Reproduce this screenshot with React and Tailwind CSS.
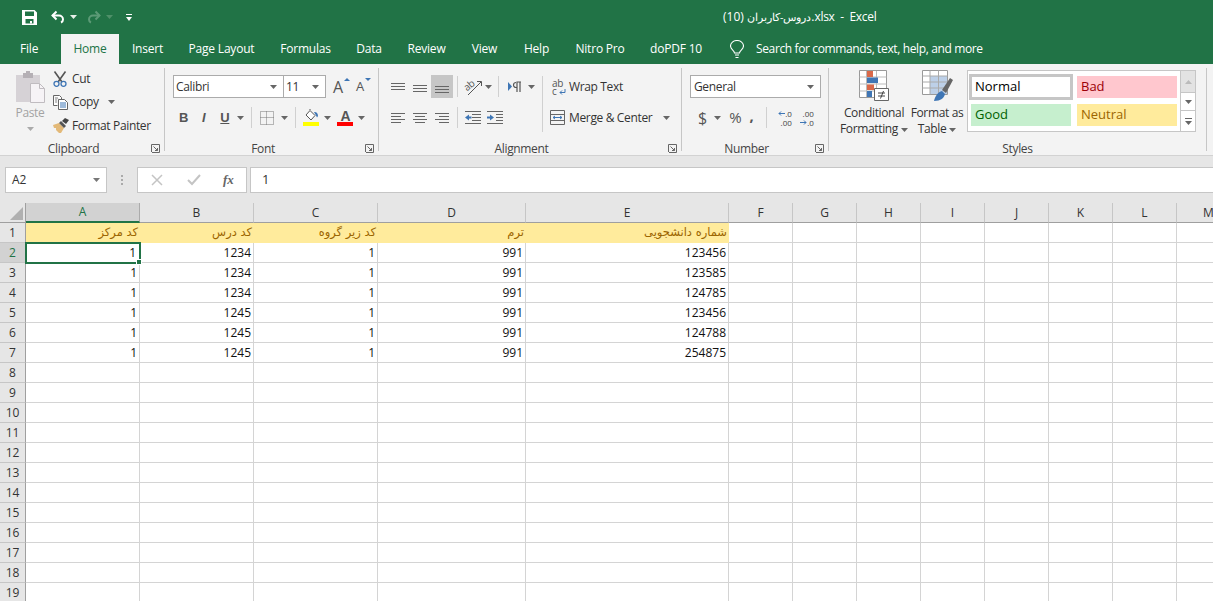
import React from 'react';

const uiFont = "font-['Open_Sans',sans-serif]";

const Caret = ({ className = 'ml-[6px]', color = '#666' }) => (
  <svg width="7" height="4" viewBox="0 0 7 4" className={`shrink-0 ${className}`}>
    <path d="M0 0h7L3.5 4z" fill={color} />
  </svg>
);

const Launcher = () => (
  <svg width="9" height="9" viewBox="0 0 9 9" className="shrink-0" fill="none" stroke="#666">
    <path d="M.5 8V.5H8.5V8.5H1" />
    <path d="M2.5 2.5l4 4M6.5 4v2.5H4" />
  </svg>
);

const VSep = ({ className = '' }) => <div className={`w-px h-[21px] bg-[#d0d0d0] shrink-0 ${className}`} />;

// horizontal line stacks used by the alignment buttons
const Lines = ({ rows, w = 14, h = 16 }) => (
  <svg width={w} height={h} viewBox={`0 0 ${w} ${h}`} className="shrink-0" stroke="#666">
    {rows.map(([x1, x2, y], i) => (
      <path key={i} d={`M${x1} ${y + 0.5}H${x2}`} />
    ))}
  </svg>
);

const Group = ({ width, label, launcher = true, children }) => (
  <div className={`flex h-full shrink-0 ${width}`}>
    <div className="flex flex-col flex-1 min-w-0">
      <div className="h-[76px]">{children}</div>
      <div className="flex items-center h-[16px]">
        <div className="flex-1 text-center text-[12px] leading-[16px] pt-[3px] text-[#444]">{label}</div>
        {launcher && <div className="w-[17px] flex justify-center pt-[2px]"><Launcher /></div>}
      </div>
    </div>
    <div className="w-px my-[4px] bg-[#c6c6c6] shrink-0" />
  </div>
);

const SaveIcon = () => (
  <svg width="15" height="15" viewBox="0 0 15 15">
    <path fillRule="evenodd" fill="#fff" d="M0 0h12.5L15 2.5V15H0zM3 1.5V6h9V1.5zM3.5 9v4.5h8V9z" />
    <path fill="#fff" d="M8 11h2v2.5H8z" />
  </svg>
);

const UndoIcon = ({ color = '#fff' }) => (
  <svg width="14" height="14" viewBox="0 0 14 14" fill="none" stroke={color} strokeWidth="2">
    <path d="M5.5 1.5L1.5 5.5l4 4" />
    <path d="M1.5 5.5H8a4 4 0 0 1 4 4c0 1.5-.8 2.5-2 3" />
  </svg>
);

const PasteIcon = () => (
  <svg width="29" height="32" viewBox="0 0 29 32">
    <path d="M0 4h24v27H0z" fill="#d6d2d6" />
    <path d="M7 2h3V0h4v2h3v5H7z" fill="#b5b0b5" />
    <path d="M14.5 12.500h9l5 5V31.500h-14z" fill="#f6f3f6" stroke="#c0bcc0" />
    <path d="M23.500 12.500v5h5" fill="none" stroke="#c0bcc0" />
  </svg>
);

const ScissorsIcon = () => (
  <svg width="14" height="16" viewBox="0 0 14 16" fill="none">
    <path d="M1.500 0.500L9 11M12.500 0.500L5 11" stroke="#555" strokeWidth="1.600" />
    <circle cx="3.500" cy="12.800" r="2.500" stroke="#3f76b5" strokeWidth="1.300" />
    <circle cx="10.500" cy="12.800" r="2.500" stroke="#3f76b5" strokeWidth="1.300" />
  </svg>
);

const CopyIcon = () => (
  <svg width="15" height="15" viewBox="0 0 15 15" fill="none" stroke="#666">
    <path d="M.5.500h6l2 2v2M.5.500v10h4" fill="#fff" />
    <path d="M5.500 4.500h6l3 3v7h-9z" fill="#fff" />
    <path d="M7 8h6M7 10h6M7 12h6" stroke="#3f76b5" />
    <path d="M2 3h3M2 5h2M2 7h2" stroke="#888" />
  </svg>
);

const PainterIcon = () => (
  <svg width="16" height="15" viewBox="0 0 16 15">
    <path d="M0 7l6-2 5 5-3 5H6L4 13 3 12v-2H1z" fill="#e3b978" />
    <path d="M6 5l2-2 5 5-2 2z" fill="#555" />
    <path d="M9 3l3-3 4 2-3 4z" fill="#444" />
  </svg>
);

const FillIcon = () => (
  <svg width="16" height="17" viewBox="0 0 16 17" fill="none">
    <path d="M3 6l4-4.500 5 5L8 11z" fill="#fff" stroke="#555" />
    <path d="M7 1V0" stroke="#555" />
    <path d="M11 3c2-.5 4 1 4 4l-1 1.500-1-2z" fill="#3f76b5" />
    <path d="M0 13h16v4H0z" fill="#ffff00" />
  </svg>
);

const BorderIcon = () => (
  <svg width="14" height="14" viewBox="0 0 14 14" fill="none" stroke="#777" strokeDasharray="1 1">
    <path d="M.5.500h13v13H.5zM6.500 .500v13M.5 6.500h13" />
  </svg>
);

const OrientIcon = () => (
  <svg width="18" height="18" viewBox="0 0 18 18" fill="none" className="shrink-0 overflow-visible">
    <text x="0" y="10" transform="rotate(-40 6 9)" fontSize="10" fill="#555" fontFamily="Open Sans">ab</text>
    <path d="M3 17L16 4" stroke="#555" />
    <path d="M12 3.500h4.500V8" stroke="#555" />
  </svg>
);

const DirIcon = () => (
  <svg width="14" height="11" viewBox="0 0 14 11" className="shrink-0">
    <path d="M0 1l4 4.500L0 10z" fill="#3f76b5" />
    <path d="M8 1.500a2.500 2.500 0 0 0 0 5h1V1H13M9 1v10M12 1v10" fill="none" stroke="#555" strokeWidth="1.200" />
  </svg>
);

const IndentIcon = ({ flip }) => (
  <svg width="16" height="14" viewBox="0 0 16 14" className="shrink-0" stroke="#666">
    {flip ? (
      <>
        <path d="M0 .500h16M9 3.500h7M9 6.500h7M9 9.500h7M0 12.500h16" />
        <path d="M7 6.500L3 3.500v2H0v2h3v2z" fill="#3f76b5" stroke="none" />
      </>
    ) : (
      <>
        <path d="M0 .500h16M7 3.500h9M7 6.500h9M7 9.500h9M0 12.500h16" />
        <path d="M0 6.500l4-3v2h2.500v2H4v2z" fill="#3f76b5" stroke="none" />
      </>
    )}
  </svg>
);

const MergeIcon = () => (
  <svg width="15" height="15" viewBox="0 0 15 15" fill="none" className="shrink-0">
    <path d="M.5.500h14v14H.5zM.5 4.500h14M.5 10.500h14" stroke="#666" />
    <path d="M3 7.500h9M3 7.500l2-1.500M3 7.500l2 1.500M12 7.500l-2-1.500M12 7.500l-2 1.500" stroke="#3f76b5" />
  </svg>
);

const CondIcon = () => (
  <svg width="30" height="31" viewBox="0 0 30 31" fill="none">
    <path d="M.5.500h27v27H.5z" fill="#fff" stroke="#999" />
    <path d="M7.500 1v26M17.500 1v26M.5 7h27M.5 14h27M.5 21h27" stroke="#bbb" />
    <path d="M8 1h6v6H8z" fill="#d9694a" />
    <path d="M8 7.500h11V13H8z" fill="#3f76b5" />
    <path d="M8 14.500h7V20H8z" fill="#d9694a" />
    <path d="M8 21h5v6H8z" fill="#3f76b5" />
    <path d="M15.500 18.500h14v12h-14z" fill="#fff" stroke="#666" />
    <path d="M19 23h7M19 26h7M24.500 21l-3 7.500" stroke="#444" />
  </svg>
);

const TableIcon = () => (
  <svg width="31" height="32" viewBox="0 0 31 32" fill="none">
    <path d="M.5.500h25v24H.5z" fill="#fff" stroke="#999" />
    <path d="M8 6h17v18H8z" fill="#bdd0e8" />
    <path d="M8 .500v24M16.500 .500v24M.5 6h25M.5 12h25M.5 18h25" stroke="#aaa" />
    <path d="M20 20l8-12 3 2-7 13z" fill="#666" />
    <path d="M12 31c1-5 4-9 8-10l3 3c-1 4-4 7-11 7z" fill="#3f76b5" />
  </svg>
);

const Bulb = () => (
  <svg width="14" height="19" viewBox="0 0 14 19" fill="none" stroke="#fff" strokeWidth="1.100">
    <path d="M4.500 13c0-2.500-4-3.500-4-7a6.500 5.500 0 0 1 13 0c0 3.500-4 4.500-4 7z" />
    <path d="M5 15h4M5.500 17.500h3" />
  </svg>
);

const tabs = [
  ['File', 'w-[61px] pl-[20px]'],
  ['Home', 'w-[58px] justify-center bg-[#f3f3f3] text-[#217346]'],
  ['Insert', 'w-[57px] justify-center'],
  ['Page Layout', 'w-[91px] justify-center'],
  ['Formulas', 'w-[77px] justify-center'],
  ['Data', 'w-[50px] justify-center'],
  ['Review', 'w-[65px] justify-center'],
  ['View', 'w-[51px] justify-center'],
  ['Help', 'w-[53px] justify-center'],
  ['Nitro Pro', 'w-[74px] justify-center'],
  ['doPDF 10', 'w-[78px] justify-center'],
];

const UndoFlip = () => (
  <div className="-scale-x-100"><UndoIcon color="#5c9a76" /></div>
);

const TitleBar = () => (
  <div className="flex items-center h-[34px] bg-[#217346] text-white">
    <div className="flex items-center w-[723px] pl-[22px]">
      <SaveIcon />
      <div className="ml-[14px]"><UndoIcon /></div>
      <Caret className="ml-[5px]" color="#e8f0ea" />
      <div className="ml-[10px]"><UndoFlip /></div>
      <Caret className="ml-[5px]" color="#4f9069" />
      <svg width="6" height="7" viewBox="0 0 6 7" className="ml-[13px]" fill="#fff">
        <path d="M0 0h6v1H0zM0 3h6L3 7z" />
      </svg>
    </div>
    <div className="text-[12px] whitespace-pre tracking-[-0.3px]">
      <span className="text-[10.5px]">دروس-کاربران</span>{' (10).xlsx  -  Excel'}
    </div>
  </div>
);

const TabBar = () => (
  <div className="flex items-stretch h-[30px] bg-[#217346] text-white text-[12px] tracking-[-0.2px]">
    {tabs.map(([name, cls]) => (
      <div key={name} className={`flex items-center ${cls}`}>{name}</div>
    ))}
    <div className="ml-[15px] flex items-center"><Bulb /></div>
    <div className="ml-[12px] flex items-center tracking-[-0.37px]">Search for commands, text, help, and more</div>
  </div>
);

const Clipboard = () => (
  <div className="flex">
    <div className="w-[53px] flex flex-col items-center pt-[7px] pl-[7px]">
      <PasteIcon />
      <div className="mt-[2px] text-[12px] leading-[16px] text-[#a3a3a3]">Paste</div>
      <Caret className="mt-[6px]" color="#aaa" />
    </div>
    <div className="flex flex-col pt-[3px] text-[12px] text-[#333]">
      <div className="flex items-center h-[23px]"><div className="w-[19px]"><ScissorsIcon /></div>Cut</div>
      <div className="flex items-center h-[24px]"><div className="w-[19px]"><CopyIcon /></div>Copy<Caret className="ml-[9px]" /></div>
      <div className="flex items-center h-[23px]"><div className="w-[19px]"><PainterIcon /></div>Format Painter</div>
    </div>
  </div>
);

const Combo = ({ text, className }) => (
  <div className={`flex items-center justify-between h-[23px] bg-white border border-[#ababab] pl-[2px] pr-[6px] text-[12px] text-[#333] ${className}`}>
    {text}
    <Caret className="" />
  </div>
);

const FontGroup = () => (
  <div className="pl-[8px] pt-[11px]">
    <div className="flex items-center">
      <Combo text="Calibri" className="w-[111px]" />
      <Combo text="11" className="w-[43px] -ml-px" />
      <div className="relative ml-[7px] w-[14px] text-[16px] leading-none text-[#555]">A
        <svg width="6" height="3" viewBox="0 0 6 3" className="absolute -top-[1px] -right-[3px]"><path d="M0 3h6L3 0z" fill="#3f76b5" /></svg>
      </div>
      <div className="relative ml-[9px] w-[12px] text-[13px] leading-none text-[#555]">A
        <svg width="6" height="3" viewBox="0 0 6 3" className="absolute -top-[2px] -right-[3px]"><path d="M0 0h6L3 3z" fill="#3f76b5" /></svg>
      </div>
    </div>
    <div className="flex items-center h-[23px] mt-[8px] text-[#555] text-[13px]">
      <span className="ml-[6px] font-bold font-['Liberation_Sans',sans-serif]">B</span>
      <span className="ml-[14px] italic font-['Liberation_Sans',sans-serif] font-bold">I</span>
      <span className="ml-[15px] underline font-bold font-['Liberation_Sans',sans-serif]">U</span>
      <Caret className="ml-[8px]" />
      <VSep className="ml-[7px]" />
      <div className="ml-[8px]"><BorderIcon /></div>
      <Caret className="ml-[7px]" />
      <VSep className="ml-[7px]" />
      <div className="ml-[7px]"><FillIcon /></div>
      <Caret className="ml-[5px]" />
      <div className="ml-[6px] w-[16px] flex flex-col items-center leading-none">
        <span className="text-[14px] h-[13px] font-bold font-['Liberation_Sans',sans-serif]">A</span>
        <div className="w-[16px] h-[4px] bg-[#ff0000]" />
      </div>
      <Caret className="ml-[5px]" />
    </div>
  </div>
);

const Alignment = () => (
  <div className="flex pl-[12px] pt-[11px]">
    <div className="w-[151px]">
      <div className="flex items-center h-[23px]">
        <div className="w-[22px]"><Lines rows={[[0, 14, 0], [0, 14, 3], [0, 14, 6]]} h={8} /></div>
        <div className="w-[18px] pt-[4px]"><Lines rows={[[0, 14, 0], [0, 14, 3], [0, 14, 6]]} h={8} /></div>
        <div className="w-[22px] h-[23px] bg-[#c6c6c6] flex justify-center items-end pb-[4px]"><Lines rows={[[0, 14, 0], [0, 14, 3], [0, 14, 6]]} h={8} /></div>
        <VSep className="ml-[4px]" />
        <div className="ml-[7px]"><OrientIcon /></div>
        <Caret className="ml-[2px]" />
        <VSep className="ml-[6px]" />
        <div className="ml-[9px]"><DirIcon /></div>
        <Caret className="ml-[6px]" />
      </div>
      <div className="flex items-center h-[23px] mt-[8px]">
        <div className="w-[22px]"><Lines rows={[[0, 14, 1], [0, 10, 4], [0, 14, 7], [0, 10, 10]]} h={12} /></div>
        <div className="w-[22px]"><Lines rows={[[0, 14, 1], [2, 12, 4], [0, 14, 7], [2, 12, 10]]} h={12} /></div>
        <div className="w-[18px]"><Lines rows={[[0, 14, 1], [4, 14, 4], [0, 14, 7], [4, 14, 10]]} h={12} /></div>
        <VSep className="ml-[4px]" />
        <div className="ml-[7px]"><IndentIcon /></div>
        <div className="ml-[6px]"><IndentIcon flip /></div>
      </div>
    </div>
    <div className="w-px h-[56px] bg-[#d0d0d0] mt-[1px]" />
    <div className="text-[12px] text-[#333]">
      <div className="flex items-center h-[23px] pl-[9px]">
        <div className="relative w-[17px] leading-[8px] text-[10px] text-[#555]">ab<br />c
          <svg width="7" height="6" viewBox="0 0 7 6" className="absolute left-[7px] bottom-0" fill="none" stroke="#3f76b5"><path d="M6 0v3.500H1M3 1.500L1 3.500l2 2" /></svg>
        </div>
        Wrap Text
      </div>
      <div className="flex items-center h-[23px] mt-[8px] pl-[7px]">
        <div className="w-[19px]"><MergeIcon /></div>
        Merge &amp; Center
        <Caret className="ml-[11px]" />
      </div>
    </div>
  </div>
);

const NumberGroup = () => (
  <div className="pl-[8px] pt-[11px]">
    <Combo text="General" className="w-[131px] pl-[3px]" />
    <div className="flex items-center h-[23px] mt-[8px] text-[#555] tracking-normal">
      <span className="ml-[8px] text-[16px] leading-none">$</span>
      <Caret className="ml-[7px]" />
      <span className="ml-[8px] text-[15px] leading-none">%</span>
      <span className="ml-[8px] text-[15px] font-bold leading-none -mt-[4px]">,</span>
      <VSep className="ml-[12px]" />
      <div className="ml-[7px] w-[18px] flex flex-col items-end text-[8px] leading-[9px] text-[#444]">
        <div className="flex items-center">
          <svg width="7" height="5" viewBox="0 0 7 5" fill="none" stroke="#3f76b5"><path d="M7 2.500H1M3 .500l-2 2 2 2" /></svg>
          .0
        </div>
        .00
      </div>
      <div className="ml-[4px] w-[18px] flex flex-col items-end text-[8px] leading-[9px] text-[#444]">
        .00
        <div className="flex items-center">
          <svg width="7" height="5" viewBox="0 0 7 5" fill="none" stroke="#3f76b5"><path d="M0 2.500h6M4 .500l2 2-2 2" /></svg>
          .0
        </div>
      </div>
    </div>
  </div>
);

const styleCells = [
  ['Normal', 'bg-white text-black border-[3px] border-[#c6c6c6] h-[26px] w-[104px] pl-[3px]'],
  ['Bad', 'bg-[#ffc7ce] text-[#9c0006] h-[22px] w-[100px] pl-[4px] ml-[4px] mt-[2px]'],
  ['Good', 'bg-[#c6efce] text-[#006100] h-[22px] w-[100px] pl-[4px] ml-[2px] mt-[4px]'],
  ['Neutral', 'bg-[#ffeb9c] text-[#9c6500] h-[22px] w-[100px] pl-[4px] ml-[6px] mt-[4px]'],
];

const Styles = () => (
  <div className="flex pt-[6px] text-[12px] text-[#333]">
    <div className="w-[82px] ml-[4px] flex flex-col items-center">
      <CondIcon />
      <div className="leading-[16px] mt-[4px] text-center whitespace-nowrap">Conditional<br />Formatting<Caret className="inline-block ml-[3px] align-middle" /></div>
    </div>
    <div className="w-[56px] -ml-[6px] flex flex-col items-center">
      <TableIcon />
      <div className="leading-[16px] mt-[3px] text-center whitespace-nowrap">Format as<br />Table<Caret className="inline-block ml-[3px] align-middle" /></div>
    </div>
    <div className="flex h-[62px] ml-[2px] w-[229px] bg-white border border-[#c6c6c6] text-[13px] tracking-normal">
      <div className="w-[213px] pl-[1px] pt-[3px] flex flex-wrap items-start content-start">
        {styleCells.map(([name, cls]) => (
          <div key={name} className={`flex items-center shrink-0 ${cls}`}>{name}</div>
        ))}
      </div>
      <div className="flex flex-col w-[15px] border-l border-[#c6c6c6]">
        <div className="h-[21px] bg-[#e3e3e3] flex items-center justify-center"><svg width="7" height="4" viewBox="0 0 7 4"><path d="M0 4h7L3.500 0z" fill="#bbb" /></svg></div>
        <div className="h-[19px] border-y border-[#c6c6c6] flex items-center justify-center"><Caret className="" /></div>
        <div className="flex-1 flex flex-col items-center justify-center gap-[2px]"><div className="w-[7px] h-px bg-[#666]" /><Caret className="" /></div>
      </div>
    </div>
  </div>
);

const Ribbon = () => (
  <div className="flex h-[92px] bg-[#f3f3f3] border-b border-[#d2d2d2] tracking-[-0.35px]">
    <Group width="w-[165px]" label="Clipboard"><Clipboard /></Group>
    <Group width="w-[214px]" label="Font"><FontGroup /></Group>
    <Group width="w-[303px]" label="Alignment"><Alignment /></Group>
    <Group width="w-[147px]" label="Number"><NumberGroup /></Group>
    <Group width="w-[378px]" label="Styles" launcher={false}><Styles /></Group>
  </div>
);

const FormulaBar = () => (
  <div className="flex h-[47px] bg-[#e6e6e6] pt-[11px] pl-[5px]">
    <div className="flex items-center justify-between w-[102px] h-[26px] bg-white border border-[#c6c6c6] pl-[6px] pr-[6px] text-[12px] text-[#333]">
      A2
      <Caret color="#777" className="" />
    </div>
    <div className="w-[30px] h-[26px] flex flex-col items-center justify-center gap-[2px]">
      <div className="w-[2px] h-[2px] bg-[#aaa]" /><div className="w-[2px] h-[2px] bg-[#aaa]" /><div className="w-[2px] h-[2px] bg-[#aaa]" />
    </div>
    <div className="flex items-center w-[110px] h-[26px] bg-white border border-[#c6c6c6]">
      <svg width="12" height="12" viewBox="0 0 12 12" className="ml-[13px]" stroke="#c4c4c4" strokeWidth="1.500"><path d="M1 1l10 10M11 1L1 11" /></svg>
      <svg width="14" height="12" viewBox="0 0 14 12" className="ml-[24px]" fill="none" stroke="#c4c4c4" strokeWidth="2"><path d="M1 6l4 4 8-9" /></svg>
      <span className="ml-[22px] text-[13px] italic font-bold text-[#666] font-['Liberation_Serif',serif]">fx</span>
    </div>
    <div className="flex items-center flex-1 ml-[3px] h-[26px] bg-white border-y border-l border-[#c6c6c6] pl-[11px] text-[13px] text-[#333]">1</div>
  </div>
);

const columns = ['A', 'B', 'C', 'D', 'E', 'F', 'G', 'H', 'I', 'J', 'K', 'L', 'M'];
const headers = ['کد مرکز', 'کد درس', 'کد زیر گروه', 'ترم', 'شماره دانشجویی'];
const data = [
  [1, 1234, 1, 991, 123456],
  [1, 1234, 1, 991, 123585],
  [1, 1234, 1, 991, 124785],
  [1, 1245, 1, 991, 123456],
  [1, 1245, 1, 991, 124788],
  [1, 1245, 1, 991, 254875],
];

const Sheet = () => {
  const rows = Array.from({ length: 19 }, (_, i) => i + 1);
  return (
    <div className="grid grid-cols-[26px_114px_114px_124px_148px_203px_64px_64px_64px_64px_64px_64px_64px_64px] auto-rows-[20px] text-[12px]">
      <div className="bg-[#e6e6e6] border-r border-b border-[#9f9f9f] flex items-end justify-end p-[2px]">
        <svg width="13" height="13" viewBox="0 0 13 13"><path d="M13 0v13H0z" fill="#b0b0b0" /></svg>
      </div>
      {columns.map((c, i) => (
        <div
          key={c}
          className={`flex items-center justify-center ${i === 0 ? 'bg-[#d2d2d2] border-b-2 border-[#217346] text-[#217346] border-r border-r-[#ababab]' : 'bg-[#e6e6e6] border-b border-[#9f9f9f] text-[#333]'} ${i > 0 ? 'border-r border-r-[#c6c6c6]' : ''}`}
        >
          {c}
        </div>
      ))}
      {rows.map((r) => (
        <React.Fragment key={r}>
          <div className={`flex items-center justify-center pt-[1px] border-r border-[#9f9f9f] border-b border-b-[#c6c6c6] ${r === 2 ? 'bg-[#d2d2d2] text-[#217346]' : 'bg-[#e6e6e6] text-[#333]'}`}>
            {r}
          </div>
          {columns.map((c, i) => {
            if (r === 1 && i < 5) {
              return (
                <div key={c} dir="rtl" className="flex items-center bg-[#ffeb9c] text-[#9c6500] px-[2px] text-[11.5px] font-['DejaVu_Sans',sans-serif] whitespace-nowrap overflow-hidden">
                  {headers[i]}
                </div>
              );
            }
            const value = r >= 2 && r <= 7 && i < 5 ? data[r - 2][i] : null;
            const active = r === 2 && i === 0;
            return (
              <div key={c} className={`relative flex items-center justify-end pr-[2px] pt-[1px] border-r border-b border-[#d4d4d4] text-[#111] ${active ? 'outline-2 -outline-offset-1 outline-[#217346] z-10 pr-[3px]' : ''}`}>
                {value}
                {active && <div className="absolute -right-[3px] -bottom-[3px] w-[6px] h-[6px] bg-[#217346] border border-white" />}
              </div>
            );
          })}
        </React.Fragment>
      ))}
    </div>
  );
};

export default function App() {
  return (
    <div className={`h-screen w-full overflow-hidden bg-white ${uiFont}`}>
      <TitleBar />
      <TabBar />
      <Ribbon />
      <FormulaBar />
      <Sheet />
    </div>
  );
}
